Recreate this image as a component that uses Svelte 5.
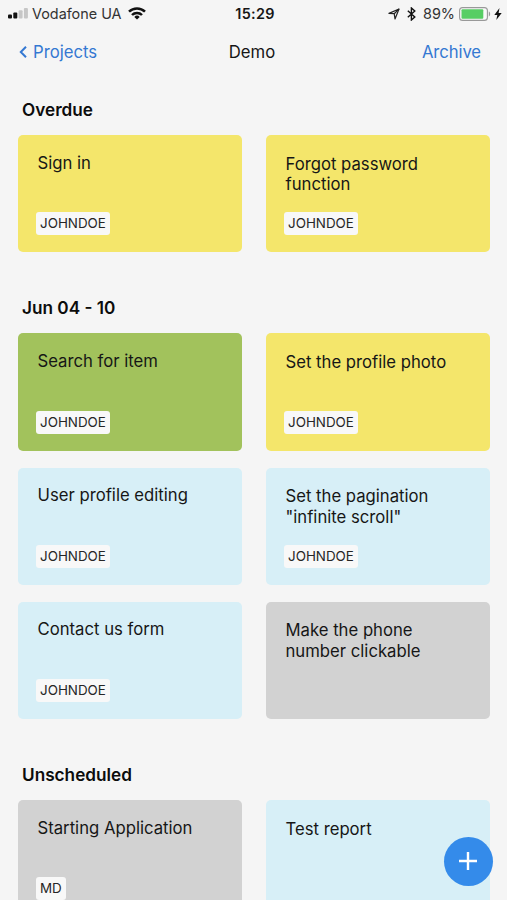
<script lang="ts">
  interface Task {
    title: string;
    color: 'yellow' | 'green' | 'blue' | 'gray';
    assignee?: string;
  }

  interface Section {
    label: string;
    tasks: Task[];
  }

  const sections: Section[] = [
    {
      label: 'Overdue',
      tasks: [
        { title: 'Sign in', color: 'yellow', assignee: 'JOHNDOE' },
        { title: 'Forgot password function', color: 'yellow', assignee: 'JOHNDOE' }
      ]
    },
    {
      label: 'Jun 04 - 10',
      tasks: [
        { title: 'Search for item', color: 'green', assignee: 'JOHNDOE' },
        { title: 'Set the profile photo', color: 'yellow', assignee: 'JOHNDOE' },
        { title: 'User profile editing', color: 'blue', assignee: 'JOHNDOE' },
        { title: 'Set the pagination "infinite scroll"', color: 'blue', assignee: 'JOHNDOE' },
        { title: 'Contact us form', color: 'blue', assignee: 'JOHNDOE' },
        { title: 'Make the phone number clickable', color: 'gray' }
      ]
    },
    {
      label: 'Unscheduled',
      tasks: [
        { title: 'Starting Application', color: 'gray', assignee: 'MD' },
        { title: 'Test report', color: 'blue' }
      ]
    }
  ];
</script>

<div class="screen">
  <div class="status-bar">
    <div class="status-left">
      <svg class="signal" width="20" height="11" viewBox="0 0 20 11">
        <rect x="0" y="6.5" width="4" height="4" rx="1" fill="#111" />
        <rect x="5.3" y="4.5" width="4" height="6" rx="1" fill="#111" />
        <rect x="10.6" y="2.3" width="4" height="8.2" rx="1" fill="#c6c6c6" />
        <rect x="15.9" y="0" width="4" height="10.5" rx="1" fill="#c6c6c6" />
      </svg>
      <span class="carrier">Vodafone UA</span>
      <svg class="wifi" width="18" height="13" viewBox="0 0 18 13" fill="none" stroke="#111" stroke-width="2.5">
        <path d="M1 4.7a11.3 11.3 0 0 1 16 0" />
        <path d="M4 8a7 7 0 0 1 10 0" />
        <path d="M9 12.6L6.3 9.9a3.9 3.9 0 0 1 5.4 0z" fill="#111" stroke="none" />
      </svg>
    </div>
    <span class="clock">15:29</span>
    <div class="status-right">
      <svg class="location" width="12" height="12" viewBox="0 0 12 12" fill="none" stroke="#222" stroke-width="1.2" stroke-linejoin="round">
        <path d="M11 1L1 5.4l5.2.3.8 5.3z" />
        <path d="M11 1L6.2 5.7" />
      </svg>
      <svg class="bluetooth" width="9" height="14" viewBox="0 0 9 14" fill="none" stroke="#111" stroke-width="1.4">
        <path d="M.8 3.8l7 6.2-3.4 3V1l3.4 3-7 6.2" />
      </svg>
      <span class="percent">89%</span>
      <svg class="battery" width="32" height="14" viewBox="0 0 32 14">
        <rect x=".6" y=".6" width="27.8" height="12.8" rx="3" fill="#fafafa" stroke="#999" stroke-width="1.1" />
        <rect x="2.5" y="2.2" width="21.8" height="9.6" rx="1" fill="#57ce64" />
        <path d="M29.8 4.6v4.8c1.8-.6 1.8-4.2 0-4.8z" fill="#999" />
      </svg>
      <svg class="bolt" width="8" height="12" viewBox="0 0 8 12">
        <path d="M5.5 0L.3 6.9h3L2.3 12 7.7 4.9H4.6z" fill="#111" />
      </svg>
    </div>
  </div>

  <nav class="nav-bar">
    <button class="nav-link back">
      <svg width="8" height="12" viewBox="0 0 8 12" fill="none" stroke="currentColor" stroke-width="2">
        <path d="M7 .8L1.8 6 7 11.2" />
      </svg>
      Projects
    </button>
    <h1 class="nav-title">Demo</h1>
    <button class="nav-link archive">Archive</button>
  </nav>

  <main class="board">
    {#each sections as section (section.label)}
      <section class="section">
        <h2 class="section-label">{section.label}</h2>
        <div class="cards">
          {#each section.tasks as task (task.title)}
            <article class="card {task.color}">
              <p class="card-title">{task.title}</p>
              {#if task.assignee}
                <span class="tag">{task.assignee}</span>
              {/if}
            </article>
          {/each}
        </div>
      </section>
    {/each}
  </main>

  <button class="fab" aria-label="Add task">
    <svg width="18" height="18" viewBox="0 0 18 18" stroke="#fff" stroke-width="2.4">
      <path d="M9 0v18M0 9h18" />
    </svg>
  </button>
</div>

<style>
  :global(body) {
    margin: 0;
    background: #f5f5f5;
  }

  .screen {
    position: relative;
    display: flex;
    flex-direction: column;
    width: 507px;
    height: 900px;
    overflow: hidden;
    background: #f5f5f5;
    color: #161616;
    font-family: Inter, 'Liberation Sans', sans-serif;
  }

  .status-bar {
    display: grid;
    grid-template-columns: 1fr auto 1fr;
    align-items: center;
    flex-shrink: 0;
    height: 27px;
    padding: 0 5px 0 8px;
    font-size: 14.4px;
  }

  .status-left,
  .status-right {
    display: flex;
    align-items: center;
  }

  .status-right {
    justify-content: flex-end;
  }

  .carrier {
    margin: 0 6px 0 4px;
    color: #333;
  }

  .clock {
    font-weight: 600;
    letter-spacing: 0.3px;
  }

  .bluetooth {
    margin: 0 7px 0 7px;
  }

  .percent {
    color: #333;
  }

  .battery {
    margin: 0 3px 0 4px;
  }

  .nav-bar {
    display: grid;
    grid-template-columns: 1fr auto 1fr;
    align-items: center;
    flex-shrink: 0;
    height: 50px;
    padding: 0 26px 0 23px;
  }

  .nav-link {
    display: flex;
    align-items: center;
    gap: 6px;
    padding: 0;
    border: none;
    background: none;
    color: #3478d2;
    font: inherit;
    font-size: 16.7px;
    cursor: pointer;
  }

  .back {
    margin-left: -4px;
  }

  .archive {
    justify-self: end;
    letter-spacing: -0.1px;
  }

  .nav-title {
    margin: 0;
    font-size: 16.7px;
    font-weight: 400;
  }

  .board {
    padding: 21px 17px 0 18px;
  }

  .section {
    margin-bottom: 44px;
  }

  .section-label {
    margin: 0 0 13px 4px;
    font-size: 17.2px;
    font-weight: 600;
    line-height: 24px;
    color: #0c0c0c;
  }

  .cards {
    display: grid;
    grid-template-columns: 1fr 1fr;
    grid-auto-rows: 117.3px;
    gap: 17px 24px;
  }

  .card {
    display: flex;
    flex-direction: column;
    align-items: flex-start;
    justify-content: space-between;
    box-sizing: border-box;
    padding: 17.5px 18px 17px;
    border-radius: 5px;
  }

  .card:nth-child(even) {
    padding-top: 18.5px;
  }

  .card.yellow {
    background: #f4e66b;
  }

  .card.green {
    background: #a2c25c;
  }

  .card.blue {
    background: #d7eff7;
  }

  .card.gray {
    background: #d2d2d2;
  }

  .card-title {
    max-width: 170px;
    margin: 0 0 0 1.5px;
    font-size: 16.7px;
    line-height: 20.5px;
  }

  .tag {
    padding: 0 4px;
    border-radius: 3px;
    background: #f8f8f8;
    font-size: 13.4px;
    line-height: 23px;
    color: #262626;
  }

  .fab {
    position: absolute;
    right: 14.5px;
    bottom: 14.5px;
    display: flex;
    align-items: center;
    justify-content: center;
    width: 49px;
    height: 49px;
    padding: 0;
    border: none;
    border-radius: 50%;
    background: #348bea;
    cursor: pointer;
  }
</style>
